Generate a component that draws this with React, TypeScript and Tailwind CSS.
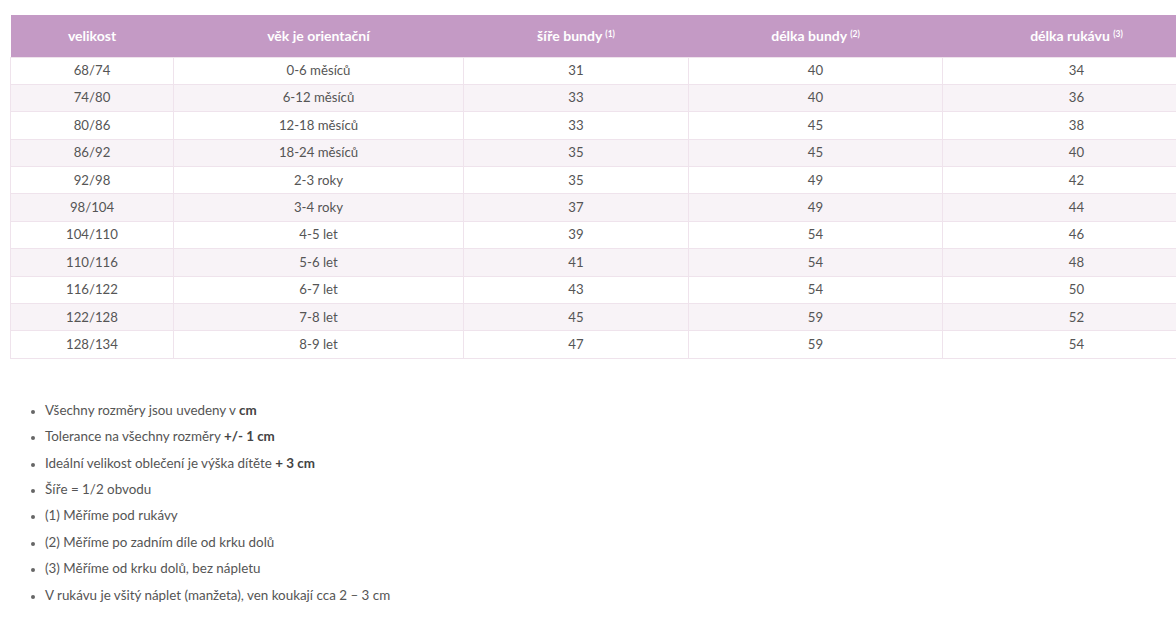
import React from "react";

const rows = [
  ["68/74", "0-6 měsíců", "31", "40", "34"],
  ["74/80", "6-12 měsíců", "33", "40", "36"],
  ["80/86", "12-18 měsíců", "33", "45", "38"],
  ["86/92", "18-24 měsíců", "35", "45", "40"],
  ["92/98", "2-3 roky", "35", "49", "42"],
  ["98/104", "3-4 roky", "37", "49", "44"],
  ["104/110", "4-5 let", "39", "54", "46"],
  ["110/116", "5-6 let", "41", "54", "48"],
  ["116/122", "6-7 let", "43", "54", "50"],
  ["122/128", "7-8 let", "45", "59", "52"],
  ["128/134", "8-9 let", "47", "59", "54"],
];

const colWidths = ["w-[163px]", "w-[290px]", "w-[225px]", "w-[254px]", "w-[268px]"];

const App = () => {
  return (
    <div className="w-[1176px] h-[623px] overflow-hidden bg-white font-['Lato','Liberation_Sans',sans-serif] text-[#555]">
      <div className="pt-[15px] pl-[10px] w-[1210px]">
        <table className="border-collapse table-fixed w-[1200px] text-[13.2px]">
          <colgroup>
            {colWidths.map((w, i) => (
              <col key={i} className={w} />
            ))}
          </colgroup>
          <thead>
            <tr className="bg-[#c49ac5] text-white h-[42px] text-[14px]">
              <th className="font-bold">velikost</th>
              <th className="font-bold">věk je orientační</th>
              <th className="font-bold">
                šíře bundy <sup className="text-[8.5px]">(1)</sup>
              </th>
              <th className="font-bold">
                délka bundy <sup className="text-[8.5px]">(2)</sup>
              </th>
              <th className="font-bold">
                délka rukávu <sup className="text-[8.5px]">(3)</sup>
              </th>
            </tr>
          </thead>
          <tbody>
            {rows.map((r, i) => (
              <tr key={i} className={`h-[27.4px] ${i % 2 === 1 ? "bg-[#f8f3f7]" : "bg-white"}`}>
                {r.map((c, j) => (
                  <td key={j} className="border border-[#efe3ec] text-center p-0 leading-none">
                    {c}
                  </td>
                ))}
              </tr>
            ))}
          </tbody>
        </table>
      </div>

      <ul className="mt-[43px] pl-[45px] list-disc text-[13.4px] marker:text-[#666] marker:text-[11px] flex flex-col gap-[9.4px] leading-[17px]">
        <li>
          Všechny rozměry jsou uvedeny v <b className="text-[#444]">cm</b>
        </li>
        <li>
          Tolerance na všechny rozměry <b className="text-[#444]">+/- 1 cm</b>
        </li>
        <li>
          Ideální velikost oblečení je výška dítěte <b className="text-[#444]">+ 3 cm</b>
        </li>
        <li>Šíře = 1/2 obvodu</li>
        <li>(1) Měříme pod rukávy</li>
        <li>(2) Měříme po zadním díle od krku dolů</li>
        <li>(3) Měříme od krku dolů, bez nápletu</li>
        <li>V rukávu je všitý náplet (manžeta), ven koukají cca 2 – 3 cm</li>
      </ul>
    </div>
  );
};

export default App;
